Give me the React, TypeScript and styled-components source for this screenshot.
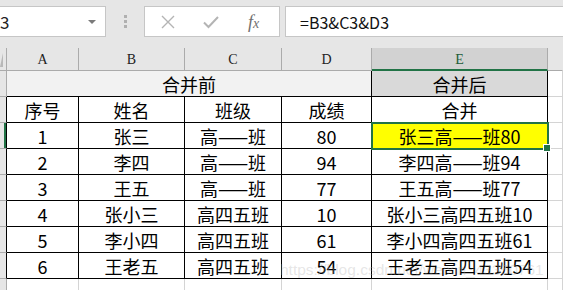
import React from 'react';
import styled, { createGlobalStyle } from 'styled-components';

const GlobalStyle = createGlobalStyle`
  html, body {
    margin: 0;
    padding: 0;
    background: #ffffff;
    overflow: hidden;
  }
  * {
    box-sizing: border-box;
  }
`;

const GREEN = '#217346';
const GRID = '#d4d4d4';
const HEAD_LINE = '#ababab';
const CJK = '"Noto Sans CJK SC", "Noto Sans", sans-serif';

type Line = 'grid' | 'black' | 'head' | 'none';

const lineColor = (l: Line) =>
  l === 'black' ? '#000000' : l === 'head' ? HEAD_LINE : l === 'grid' ? GRID : 'transparent';

const rows = [
  { no: '1', name: '张三', cls: '高——班', score: '80' },
  { no: '2', name: '李四', cls: '高——班', score: '94' },
  { no: '3', name: '王五', cls: '高——班', score: '77' },
  { no: '4', name: '张小三', cls: '高四五班', score: '10' },
  { no: '5', name: '李小四', cls: '高四五班', score: '61' },
  { no: '6', name: '王老五', cls: '高四五班', score: '54' },
];

const App: React.FC = () => {
  return (
    <Page>
      <GlobalStyle />
      <Toolbar>
        <NameBox>
          <NameText>E3</NameText>
          <DropArrow />
        </NameBox>
        <Grip>
          <i />
          <i />
          <i />
        </Grip>
        <ButtonBox>
          <ToolIcon width="14" height="14" viewBox="0 0 14 14">
            <path d="M1 1 L13 13 M13 1 L1 13" stroke="#b4b4b4" strokeWidth="1.4" fill="none" />
          </ToolIcon>
          <ToolIcon width="16" height="14" viewBox="0 0 16 14">
            <path d="M1 7.5 L5.5 12 L15 2" stroke="#b4b4b4" strokeWidth="2" fill="none" />
          </ToolIcon>
          <Fx>
            f<small>x</small>
          </Fx>
        </ButtonBox>
        <FormulaBox>=B3&amp;C3&amp;D3</FormulaBox>
      </Toolbar>

      <SheetWrap>
        <Sheet>
          {/* column headers */}
          <Corner />
          {['A', 'B', 'C', 'D'].map((c) => (
            <ColHead key={c}>{c}</ColHead>
          ))}
          <ColHead $active>E</ColHead>
          <ColHead $last />

          {/* 合并前 / 合并后 */}
          <RowHead />
          <Cell $span={4} $bg="#f2f2f2" $right="black" $bottom="black">
            合并前
          </Cell>
          <Cell $bg="#d9d9d9" $right="black" $bottom="black">
            合并后
          </Cell>
          <Cell />

          {/* 表头 */}
          <RowHead $black />
          <Cell $right="black" $bottom="black">序号</Cell>
          <Cell $right="black" $bottom="black">姓名</Cell>
          <Cell $right="black" $bottom="black">班级</Cell>
          <Cell $right="black" $bottom="black">成绩</Cell>
          <Cell $right="black" $bottom="black">合并</Cell>
          <Cell />

          {rows.map((r, i) => (
            <React.Fragment key={r.no}>
              <RowHead $black $selected={i === 0} />
              <Cell $right="black" $bottom="black">{r.no}</Cell>
              <Cell $right="black" $bottom="black">{r.name}</Cell>
              <Cell $right="black" $bottom="black">{r.cls}</Cell>
              <Cell $right="black" $bottom="black">{r.score}</Cell>
              {i === 0 ? (
                <SelectedCell $right="black" $bottom="black" $bg="#ffff00">
                  {r.name + r.cls + r.score}
                </SelectedCell>
              ) : (
                <Cell $right="black" $bottom="black">
                  {r.name + r.cls + r.score}
                </Cell>
              )}
              <Cell />
            </React.Fragment>
          ))}

          {/* 空行 */}
          <RowHead />
          <Cell />
          <Cell />
          <Cell />
          <Cell />
          <Cell />
          <Cell />
        </Sheet>
        <Watermark>https://blog.csdn.net/weixin_43350761</Watermark>
      </SheetWrap>
    </Page>
  );
};

export default App;

const Page = styled.div`
  width: 563px;
  height: 290px;
  background: #e6e6e6;
  overflow: hidden;
`;

const Toolbar = styled.div`
  display: flex;
  align-items: center;
  height: 48px;
  padding-bottom: 9px;
  padding-top: 4px;
  gap: 0;
`;

const NameBox = styled.div`
  display: flex;
  align-items: center;
  justify-content: space-between;
  width: 116px;
  height: 31px;
  margin-left: -10px;
  padding: 0 9px 0 0;
  background: #ffffff;
  border: 1px solid #c6c6c6;
  border-left: none;
`;

const NameText = styled.span`
  font-family: ${CJK};
  font-size: 17px;
  color: #222;
  line-height: 1;
`;

const DropArrow = styled.span`
  width: 0;
  height: 0;
  border-left: 4px solid transparent;
  border-right: 4px solid transparent;
  border-top: 4px solid #7a7a7a;
`;

const Grip = styled.div`
  display: flex;
  flex-direction: column;
  gap: 2px;
  width: 38px;
  align-items: center;

  i {
    display: block;
    width: 3px;
    height: 3px;
    background: #b0b0b0;
  }
`;

const ButtonBox = styled.div`
  display: flex;
  align-items: center;
  width: 136px;
  height: 31px;
  padding-left: 16px;
  gap: 28px;
  background: #ffffff;
  border: 1px solid #c6c6c6;
`;

const ToolIcon = styled.svg`
  display: block;
  flex: none;
`;

const Fx = styled.span`
  font-family: 'Liberation Serif', serif;
  font-style: italic;
  font-size: 18px;
  color: #707070;
  line-height: 1;
  margin-left: 1px;

  small {
    font-size: 14px;
  }
`;

const FormulaBox = styled.div`
  flex: 1;
  height: 31px;
  margin-left: 5px;
  margin-right: -4px;
  padding-left: 14px;
  display: flex;
  align-items: center;
  font-family: ${CJK};
  font-size: 16px;
  color: #111;
  background: #ffffff;
  border: 1px solid #c6c6c6;
`;

const SheetWrap = styled.div`
  position: relative;
`;

const Sheet = styled.div`
  display: grid;
  grid-template-columns: 7px 72px 106px 97px 90px 176px 1fr;
  grid-template-rows: 23px repeat(9, 26px);
  background: #ffffff;
`;

const Corner = styled.div`
  background: #e6e6e6;
  border-right: 1px solid ${HEAD_LINE};
  border-bottom: 1px solid ${HEAD_LINE};
  position: relative;

  &::after {
    content: '';
    position: absolute;
    left: 0;
    bottom: 3px;
    border-left: 3px solid transparent;
    border-bottom: 14px solid #b8b8b8;
  }
`;

const ColHead = styled.div<{ $active?: boolean; $last?: boolean }>`
  display: flex;
  align-items: center;
  justify-content: center;
  font-family: 'Liberation Serif', serif;
  font-size: 14px;
  padding-top: 2px;
  color: ${(p) => (p.$active ? '#1d5c38' : '#222222')};
  background: ${(p) => (p.$active ? '#d2d2d2' : '#e6e6e6')};
  border-right: 1px solid ${(p) => (p.$last ? 'transparent' : HEAD_LINE)};
  border-bottom: ${(p) => (p.$active ? `2px solid ${GREEN}` : `1px solid ${HEAD_LINE}`)};
`;

const RowHead = styled.div<{ $black?: boolean; $selected?: boolean }>`
  background: #e6e6e6;
  border-bottom: 1px solid ${HEAD_LINE};
  border-right: 1px solid ${(p) => (p.$black ? '#000000' : HEAD_LINE)};
  box-shadow: ${(p) => (p.$selected ? `inset -2px 0 0 ${GREEN}` : 'none')};
`;

const Cell = styled.div<{ $span?: number; $bg?: string; $right?: Line; $bottom?: Line }>`
  grid-column: span ${(p) => p.$span ?? 1};
  display: flex;
  align-items: center;
  justify-content: center;
  font-family: ${CJK};
  font-size: 18px;
  line-height: 1;
  color: #000000;
  white-space: nowrap;
  background: ${(p) => p.$bg ?? '#ffffff'};
  border-right: 1px solid ${(p) => lineColor(p.$right ?? 'grid')};
  border-bottom: 1px solid ${(p) => lineColor(p.$bottom ?? 'grid')};
`;

const SelectedCell = styled(Cell)`
  position: relative;

  &::before {
    content: '';
    position: absolute;
    left: -1px;
    top: -1px;
    right: -2px;
    bottom: -2px;
    border: 2px solid ${GREEN};
  }

  &::after {
    content: '';
    position: absolute;
    right: -4px;
    bottom: -4px;
    width: 6px;
    height: 6px;
    background: ${GREEN};
    border: 1px solid #ffffff;
  }
`;

const Watermark = styled.div`
  position: absolute;
  left: 280px;
  top: 213px;
  font-family: 'Liberation Sans', sans-serif;
  font-size: 15.5px;
  color: rgba(170, 170, 170, 0.3);
  white-space: nowrap;
  pointer-events: none;
`;
